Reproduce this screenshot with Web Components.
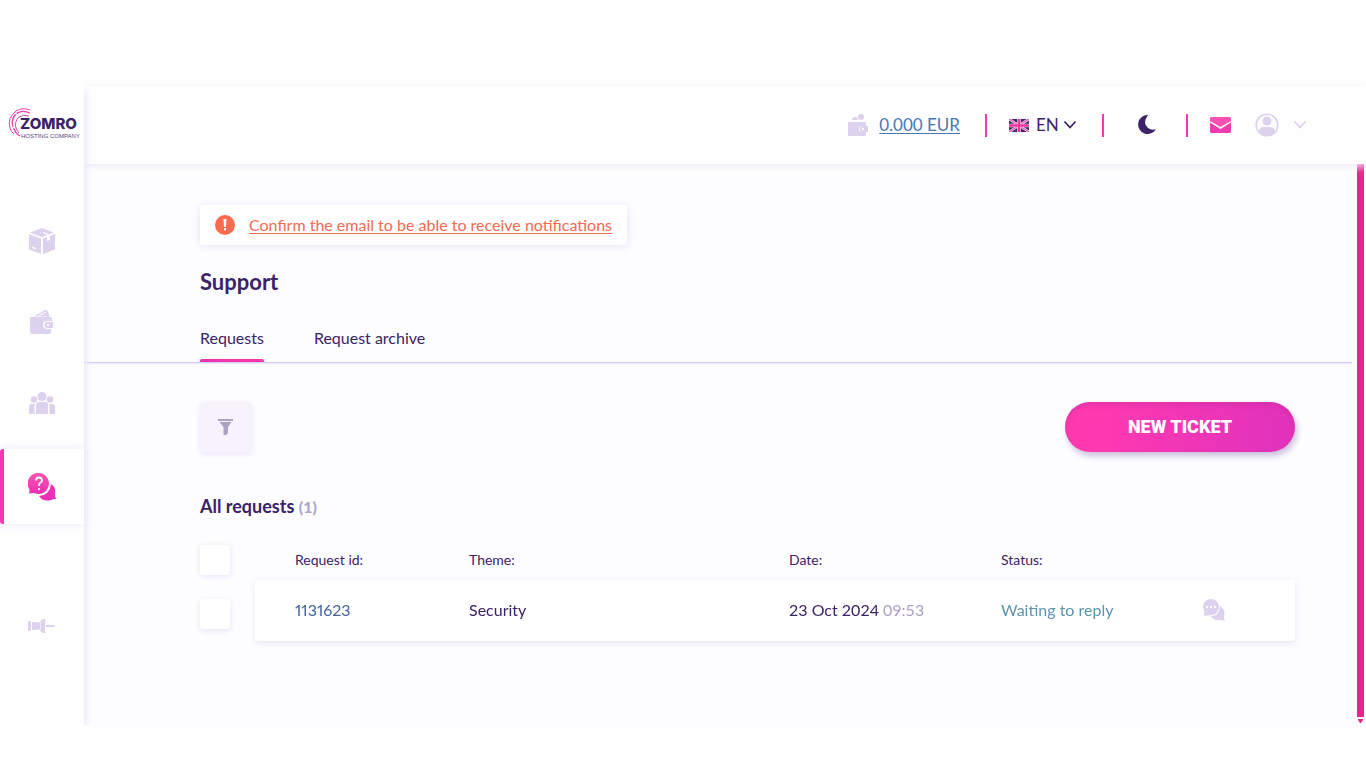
<!DOCTYPE html>
<html lang="en">
<head>
<meta charset="utf-8">
<title>Zomro – Support</title>
<style>
  body { margin: 0; background: #fefefe; color: #3c2266; font: 400 16px/24px Lato, "Open Sans", sans-serif; }
</style>
</head>
<body>
<zomro-app></zomro-app>
<script>
const define = (name, html) => customElements.define(name, class extends HTMLElement {
  constructor() {
    super();
    const t = document.createElement('template');
    t.innerHTML = html;
    this.attachShadow({ mode: 'open' }).append(t.content.cloneNode(true));
  }
});

/* ---- icons ---- */
const icons = {
  box: [28, 28, '<path fill="#dcd2ee" d="M14 0 26 4.500 14 9 2 4.500ZM1 6l12 4.500V26L1 21.500ZM27 6v15.500L15 26V10.500l4-1.500v4l3-1V8Z"/><path stroke="#fff" stroke-width="1.200" fill="none" d="m15 4.500 5 2v2"/><path fill="#fff" d="m4 18.500 4 1.500v1.500L4 20Z"/>'],
  wallet: [28, 28, '<path fill="#dcd2ee" d="M3 8h19.500q1.500 0 1.500 1.500V12h-5q-4 0-4 4t4 4h4v3q0 2-2 2H4q-2 0-2-2V9ZM6 7.500 17 1q2-.500 3 2l2 4.500Z"/><path d="m9 8 9-5" stroke="#fff"/><path fill="#dcd2ee" fill-rule="evenodd" d="M19 13h6v6h-6q-2.500 0-2.500-3t2.500-3Zm0 2v2h2v-2Z"/>'],
  people: [28, 28, '<g fill="#dcd2ee"><circle cx="14" cy="6.500" r="4.500"/><circle cx="6" cy="9.500" r="3.300"/><circle cx="22" cy="9.500" r="3.300"/><path d="M8 24V15q0-3 3-3h6q3 0 3 3v9ZM1 24v-7q0-3 3-3h3q-.500 1-.500 2v8ZM27 24v-7q0-3-3-3h-3q.500 1 .500 2v8Z"/></g>'],
  help: [28, 28, '<defs><linearGradient id="g" x2="0" y2="1"><stop stop-color="#fb55b0"/><stop offset="1" stop-color="#ea2fb4"/></linearGradient></defs><path fill="#ea2fb8" d="M23 11q5 3 4 9-.500 2 1 6-3 0-5 1-8 2-12-4Q22 22 23 11Z"/><path fill="url(#g)" d="M11 0a10.500 10.500 0 1 1-5 20q-2 0-5 .500 1-3 0-5A10.500 10.500 0 0 1 11 0Z"/><path d="M8 7.500q0-3 3-3t3 3q0 1.500-2 2.500-1 .500-1 3M11 15v2" stroke="#fff" stroke-width="1.800" fill="none"/>'],
  pin: [28, 28, '<path fill="#dcd2ee" d="M0 9h2l1 1v8l-1 1H0ZM4 10l8 .500V9l3-2h2v14h-2l-3-2v-1.500l-8 .500ZM18 13h8l1 1-1 1h-8Z"/><path stroke="#eee8f7" d="M12.500 9v10"/>'],
  purse: [20, 22, '<g fill="#dcd2ee"><circle cx="13" cy="3" r="3"/><path d="M4 6q0-3 3-3t3 3ZM1 8h16q1 0 1 1v3h-4q-3 0-3 3t3 3h4v3q0 1-1 1H1q-1 0-1-1V8Z"/><path fill-rule="evenodd" d="M14 12h6v6h-6q-2 0-2-3t2-3Zm0 2v2h2v-2Z"/></g>'],
  flag: [20, 13, '<path fill="#3f2a70" d="M0 0h20v13H0z"/><path stroke="#e8dcf0" stroke-width="2.400" d="m0 0 20 13M20 0 0 13"/><path stroke="#f5359f" stroke-width="1" d="m0 0 20 13M20 0 0 13"/><path stroke="#f3dcea" stroke-width="3.600" d="M10 0v13M0 6.500h20"/><path stroke="#f5359f" stroke-width="2.400" d="M10 0v13M0 6.500h20"/>'],
  moon: [20, 20, '<path fill="#3c2266" d="M11 0Q5 8 11 13q4 3 8 1a9.500 9.500 0 1 1-8-14Z"/>'],
  mail: [22, 16, '<path fill="#fb50b1" d="M1 0h19l1 1v3l-10.500 6L0 4V1Z"/><path fill="#ef3bb2" d="M0 5.500 10.500 12 21 5.500V15l-1 1H1l-1-1Z"/>'],
  user: [24, 24, '<circle cx="12" cy="12" r="10.800" fill="none" stroke="#dcd2ee" stroke-width="1.600"/><circle cx="12" cy="8" r="4.500" fill="#dcd2ee"/><path fill="#dcd2ee" d="M4 19q0-5 5-5h6q5 0 5 5-8 8-16 0Z"/>'],
  down: [14, 10, '<path fill="none" stroke="currentColor" stroke-width="1.800" d="m1.500 1.500 5.500 6 5.500-6"/>'],
  alert: [20, 20, '<circle cx="10" cy="10" r="10" fill="#ff6b4e"/><path fill="#fff" d="M8.500 4h3l-.500 8H9ZM9 13h2v2.500H9z"/>'],
  funnel: [16, 18, '<path fill="#aba3c4" d="M0 1h15v2H0ZM1.500 4h12L10 9v6l-2 2H5.500V9Z"/>'],
  chat: [22, 22, '<path fill="#dcd2ee" d="M17 7q6 4 4 10l.500 5q-2-1-4-1-7 1-10-4Q17 17 17 7Z"/><path fill="#dcd2ee" d="M8 0a7.500 7.500 0 0 1 0 16q-2 .500-7.500.500Q2 14 .500 10A7.800 7.800 0 0 1 8 0Z"/><path fill="#fff" d="M3 7h2v2H3zM7 7h2v2H7zM11 7h2v2h-2z"/>']
};
customElements.define('ui-icon', class extends HTMLElement {
  connectedCallback() {
    const [w, h, body] = icons[this.getAttribute('name')];
    this.attachShadow({ mode: 'open' }).innerHTML =
      `<style>:host{display:block;flex:none}svg{display:block}</style><svg width="${w}" height="${h}" viewBox="0 0 ${w} ${h}" aria-hidden="true">${body}</svg>`;
  }
});

define('brand-logo', `
<style>
  :host { display: block; }
  a { display: block; }
  svg { display: block; }
</style>
<a href="#" aria-label="Zomro hosting company"><svg width="72" height="34" viewBox="0 0 72 34">
  <g fill="none" stroke="#ee3fae">
    <path d="M22 3Q15 0 8 4-1 11 2 21q1 4 4 6"/>
    <path d="M22 6Q13 2 7 8q-5 7-1 14 2 5 6 7" stroke-width="1.300" stroke-dasharray="14 1"/>
    <path d="M21 9q-6-2-10 1-5 5-3 11 1 3 3 5" stroke="#c24fa5"/>
  </g>
  <text x="12" y="22" font-family="Inter, sans-serif" font-weight="800" font-size="15" fill="#3c2266">ZOMRO</text>
  <text x="13" y="31" font-family="'Liberation Sans', sans-serif" font-size="6" fill="#5c4583">HOSTING COMPANY</text>
</svg></a>`);

define('side-link', `
<style>
  :host { display: block; }
  a { display: flex; align-items: center; justify-content: center; height: 75px; box-sizing: border-box; }
  :host([active]) a { background: #fff; border-left: 4px solid #f637b4; padding-right: 4px; border-radius: 3px 0 0 3px; box-shadow: 0 0 10px #ebe6f8; }
</style>
<a href="#"><slot></slot></a>`);

define('side-bar', `
<style>
  :host { display: flex; flex-direction: column; background: #fefeff; box-shadow: 2px 4px 8px #ece6fa; clip-path: inset(0 -12px 0 0); position: relative; z-index: 2; }
  brand-logo { padding: 21px 0 63px 8px; }
  nav { display: flex; flex-direction: column; gap: 6px; }
  side-link[active] { margin-top: 2px; }
  side-link:last-child { margin-top: 58px; }
</style>
<brand-logo></brand-logo>
<nav aria-label="Main">
  <side-link aria-label="Services"><ui-icon name="box"></ui-icon></side-link>
  <side-link aria-label="Billing"><ui-icon name="wallet"></ui-icon></side-link>
  <side-link aria-label="Partners"><ui-icon name="people"></ui-icon></side-link>
  <side-link active aria-label="Support"><ui-icon name="help"></ui-icon></side-link>
  <side-link aria-label="Pin menu"><ui-icon name="pin"></ui-icon></side-link>
</nav>`);

define('top-bar', `
<style>
  :host { display: flex; align-items: center; justify-content: flex-end; height: 78px; padding-right: 59px; background: #fefeff; box-shadow: 0 2px 8px #efeaf9; position: relative; z-index: 1; font-size: 17px; }
  .balance { display: flex; align-items: center; gap: 11px; margin-right: 25px; color: #4579b5; text-decoration: none; }
  .balance span { text-decoration: underline; text-underline-offset: 2px; text-decoration-thickness: 1px; }
  i { width: 2px; height: 23px; background: #f637b4; }
  .lang { display: flex; align-items: center; gap: 7px; margin: 0 25px 0 22px; }
  .pick { display: grid; grid-template-columns: 27px 14px; align-items: center; }
  select { grid-area: 1 / 1 / 2 / 3; appearance: none; border: 0; padding: 0; margin: 0; background: none; font: inherit; color: #3c2266; }
  .pick ui-icon { grid-area: 1 / 2; pointer-events: none; }
  button { border: 0; padding: 0; background: none; color: inherit; display: flex; align-items: center; }
  .moon { margin: 0 29px 0 33px; }
  .mail { margin: 0 23px 0 22px; }
  .user { gap: 14px; color: #dcd2ee; }
</style>
<a class="balance" href="#"><ui-icon name="purse"></ui-icon><span>0.000 EUR</span></a>
<i></i>
<div class="lang"><ui-icon name="flag"></ui-icon><div class="pick"><select aria-label="Language"><option>EN</option></select><ui-icon name="down"></ui-icon></div></div>
<i></i>
<button class="moon" aria-label="Dark theme"><ui-icon name="moon"></ui-icon></button>
<i></i>
<button class="mail" aria-label="Messages"><ui-icon name="mail"></ui-icon></button>
<button class="user" aria-label="Account"><ui-icon name="user"></ui-icon><ui-icon name="down"></ui-icon></button>`);

define('notice-card', `
<style>
  :host { display: flex; width: fit-content; align-items: center; gap: 14px; height: 40px; padding: 0 15px; background: #fff; border-radius: 3px; box-shadow: 0 1px 8px #e6e0f6; }
</style>
<ui-icon name="alert"></ui-icon><slot></slot>`);

define('page-tabs', `
<style>
  :host { display: block; border-bottom: 1px solid #d6cdec; box-shadow: 0 1px 1px #f0ebfa; padding-left: 116px; }
  nav { display: flex; gap: 50px; }
  a { color: #3c2266; text-decoration: none; height: 36px; }
  a[aria-current] { position: relative; }
  a[aria-current]::after { content: ""; position: absolute; inset: auto 0 0; height: 3px; border-radius: 2px 2px 0 0; background: linear-gradient(90deg, #e633b8, #ff37ac); }
</style>
<nav aria-label="Requests"><a href="#" aria-current="page">Requests</a><a href="#">Request archive</a></nav>`);

define('request-table', `
<style>
  :host { display: block; }
  table { width: 100%; table-layout: fixed; border-spacing: 0; }
  th, td { padding: 0; text-align: left; font-weight: inherit; }
  th { height: 30px; padding-bottom: 5px; font-size: 14px; }
  td { height: 59px; padding-bottom: 2px; background: #fff; }
  .check { width: 55px; }
  .id { width: 174px; padding-left: 40px; border-radius: 3px 0 0 3px; }
  .date { width: 212px; }
  .status { width: 202px; }
  .open { width: 92px; border-radius: 0 3px 3px 0; }
  td.check { background: none; padding: 7px 0 0; height: 54px; }
  tbody tr { filter: drop-shadow(0 2px 3px #e9e4f6); }
  input { appearance: none; display: block; width: 30px; height: 30px; margin: 0; background: #fff; border-radius: 3px; }
  th input { box-shadow: 0 1px 7px #e6e0f6; }
  a { color: #41659c; text-decoration: none; font-variant-numeric: proportional-nums; }
  small { font-size: inherit; color: #aca0c6; }
  td.status { color: #5c94ad; }
</style>
<table>
  <thead><tr>
    <th class="check"><input type="checkbox" aria-label="Select all requests"></th>
    <th class="id">Request id:</th><th>Theme:</th><th class="date">Date:</th><th class="status">Status:</th><th class="open"></th>
  </tr></thead>
  <tbody><tr>
    <td class="check"><input type="checkbox" aria-label="Select request 1131623"></td>
    <td class="id"><a href="#">1131623</a></td><td>Security</td><td class="date">23 Oct 2024 <small>09:53</small></td>
    <td class="status">Waiting to reply</td><td class="open"><a href="#" aria-label="Open conversation"><ui-icon name="chat"></ui-icon></a></td>
  </tr></tbody>
</table>`);

define('support-page', `
<style>
  :host { display: block; background: #fdfdff; padding-top: 41px; }
  .inset { padding: 0 57px 0 116px; }
  notice-card a { color: #f36a52; text-underline-offset: 2px; text-decoration-thickness: 1px; }
  h1 { margin: 25px 0 32px; font-size: 22px; line-height: 24px; font-weight: 700; }
  .tools { display: flex; justify-content: space-between; align-items: center; padding-top: 39px; }
  button { border: 0; padding: 0; font: inherit; }
  .filter { width: 51px; height: 50px; display: grid; place-items: center; background: #f6f3fd; border-radius: 4px; box-shadow: 0 2px 6px #e9e3f8; }
  .new { width: 230px; height: 50px; border-radius: 25px; color: #fff; font: 900 18px/24px Roboto, sans-serif; background: linear-gradient(100deg, #ff39b0 15%, #e233bc 90%); box-shadow: inset 0 3px 5px #c92f9b88, 2px 4px 6px #c9bedc; }
  h2 { margin: 42px 0 26px; font-size: 18px; line-height: 24px; font-weight: 700; }
  h2 span { font-size: 16px; color: #aca0c6; }
</style>
<div class="inset">
  <notice-card><a href="#">Confirm the email to be able to receive notifications</a></notice-card>
  <h1>Support</h1>
</div>
<page-tabs></page-tabs>
<div class="inset">
  <div class="tools"><button class="filter" aria-label="Filter"><ui-icon name="funnel"></ui-icon></button><button class="new">NEW TICKET</button></div>
  <h2>All requests <span>(1)</span></h2>
  <request-table></request-table>
</div>`);

define('scroll-rail', `
<style>
  :host { display: flex; flex-direction: column; align-items: center; padding: 0 2px 3px 5px; background: #fdfdff; }
  div { flex: 1; align-self: stretch; background: linear-gradient(#f84fb0, #e8258f 8px); }
  svg { display: block; padding-top: 2px; }
</style>
<div></div><svg width="5" height="4" viewBox="0 0 5 4"><path fill="#e8258f" d="M0 0h5v1L3 4H2L0 1Z"/></svg>`);

define('zomro-app', `
<style>
  :host { display: grid; box-sizing: border-box; min-height: 100vh; padding: 86px 0 42px; grid-template: auto 1fr / 84px minmax(0, 1fr) 14px; }
  side-bar { grid-area: 1 / 1 / 3 / 2; }
  top-bar { grid-area: 1 / 2 / 2 / 4; }
</style>
<side-bar></side-bar>
<top-bar></top-bar>
<support-page></support-page>
<scroll-rail></scroll-rail>`);
</script>
</body>
</html>
